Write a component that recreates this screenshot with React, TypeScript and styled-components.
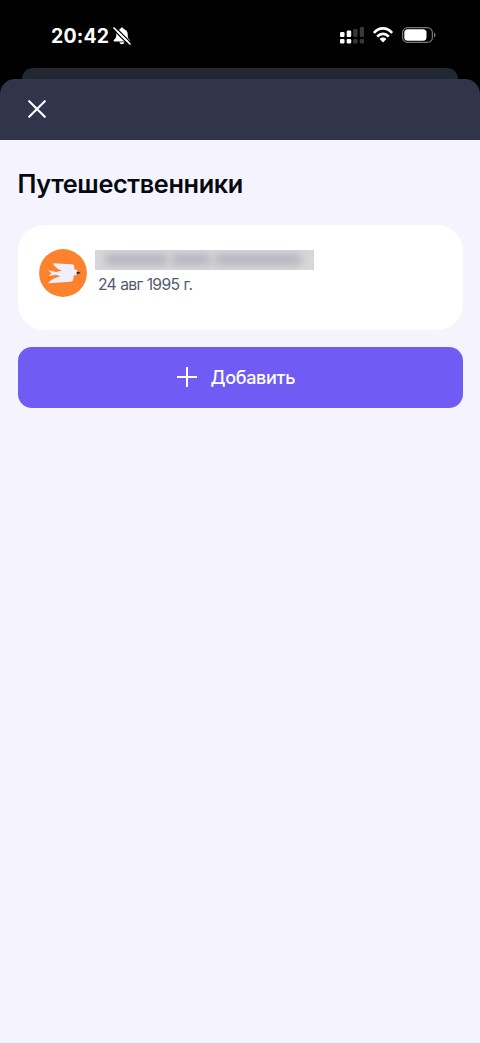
import React from 'react';
import styled, { createGlobalStyle } from 'styled-components';

const GlobalStyle = createGlobalStyle`
  *, *::before, *::after { box-sizing: border-box; }
  body { margin: 0; background: #000; font-family: Inter, "Liberation Sans", sans-serif; }
  button { font: inherit; border: 0; padding: 0; }
`;

const Screen = styled.div`
  display: flex;
  flex-direction: column;
  height: 1043px;
  background: #000;
  overflow: hidden;
`;

const StatusBar = styled.header`
  display: flex;
  align-items: center;
  justify-content: space-between;
  height: 68px;
  flex: none;
  padding: 2px 44px 0 51px;
`;

const Clock = styled.div`
  display: flex;
  align-items: center;
  gap: 4px;
  padding-top: 2px;
  color: #fff;
  font-size: 19.5px;
  line-height: 24px;
  font-weight: 700;
  letter-spacing: 0.15px;
`;

const Indicators = styled.div`
  display: flex;
  align-items: center;
  gap: 9px;
`;

const Glyph = styled.svg`
  display: block;
  flex: none;
`;

const SheetBehind = styled.div`
  height: 11px;
  flex: none;
  margin: 0 22px;
  border-radius: 11px 11px 0 0;
  background: #232731;
`;

const Sheet = styled.main`
  display: flex;
  flex-direction: column;
  flex: 1;
`;

const SheetHeader = styled.div`
  display: flex;
  align-items: center;
  height: 60.5px;
  flex: none;
  padding-left: 28px;
  border-radius: 15px 15px 0 0;
  background: #30354b;
`;

const CloseButton = styled.button`
  background: none;
  display: block;
`;

const Content = styled.div`
  display: flex;
  flex-direction: column;
  flex: 1;
  padding: 28.5px 17.5px 0;
  background: #f5f4fe;
`;

const Title = styled.h1`
  margin: 0;
  color: #06090f;
  font-size: 25.3px;
  line-height: 32px;
  font-weight: 600;
  letter-spacing: -0.37px;
  white-space: nowrap;
`;

const TravellerCard = styled.section`
  display: flex;
  align-items: flex-start;
  gap: 8px;
  height: 105px;
  margin-top: 24.6px;
  padding: 24px 21.5px;
  border-radius: 26px;
  background: #fff;
`;

const TravellerInfo = styled.div`
  display: flex;
  flex-direction: column;
  gap: 5px;
  padding-top: 1.2px;
`;

const HiddenName = styled.div`
  width: 219px;
  height: 20px;
  background: #d8d8db;
  overflow: hidden;
  display: flex;
  align-items: center;
  gap: 5px;
  padding-left: 10px;
`;

const NameWord = styled.span<{ $width: number }>`
  width: ${({ $width }) => $width}px;
  height: 11px;
  background: #b3b4bb;
  filter: blur(4.5px);
`;

const BirthDate = styled.div`
  padding-left: 3px;
  color: #555970;
  font-size: 15.7px;
  line-height: 20px;
  letter-spacing: -0.7px;
  word-spacing: 0.4px;
  white-space: nowrap;
`;

const AddButton = styled.button`
  display: flex;
  align-items: center;
  justify-content: center;
  gap: 13.5px;
  height: 61px;
  margin-top: 17.2px;
  padding-right: 8px;
  border-radius: 14px;
  background: #715bf5;
  color: #fff;
`;

const AddLabel = styled.span`
  font-size: 18px;
  line-height: 24px;
  font-weight: 500;
  letter-spacing: -0.3px;
  padding-top: 1px;
`;

const MutedBell = () => (
  <Glyph width="18" height="18" viewBox="0 0 18 18">
    <path d="M9 .5c-.9 0-1.500.6-1.600 1.400C5 2.500 3.300 4.500 3.300 7c0 3.500-.7 4.500-2.200 5.800-.9.800-.5 1.700.5 1.700h14.400c1 0 1.400-.9.500-1.700C15 11.500 14.700 10.500 14.700 7c0-2.500-1.700-4.500-4.100-5.100C10.500 1.100 9.900.5 9 .5zM6.500 15.300h5c-.2 1.200-1.300 2-2.500 2s-2.300-.8-2.500-2z" fill="#fff" />
    <path d="M0 2.200L16 18.200M2.200 0L18 15.800" stroke="#000" strokeWidth="1.300" />
    <path d="M1 1L17 17" stroke="#fff" strokeWidth="1.700" strokeLinecap="round" />
  </Glyph>
);

const Signal = () => (
  <Glyph width="24" height="18" viewBox="0 0 24 18">
    <g fill="#fff">
      <rect x="0" y="6" width="4.500" height="5" rx="1.200" />
      <rect x="6.700" y="4.500" width="4.500" height="6.500" rx="1.200" />
      <rect x="0" y="13" width="4.500" height="4.500" rx="1.200" />
      <rect x="6.700" y="13" width="4.500" height="4.500" rx="1.200" />
    </g>
    <g fill="#383838">
      <rect x="13.300" y="3" width="4.200" height="8" rx="1.200" />
      <rect x="19.800" y="1" width="4.200" height="10" rx="1.200" />
      <rect x="13.300" y="13" width="4.200" height="4.500" rx="1.200" />
      <rect x="19.800" y="13" width="4.200" height="4.500" rx="1.200" />
    </g>
  </Glyph>
);

const Wifi = () => (
  <Glyph width="20" height="16" viewBox="0 0 20 16">
    <g fill="none" stroke="#fff" strokeWidth="2.700">
      <path d="M.9 6C6-.2 14-.2 19.100 6" />
      <path d="M4.200 9.700c3.500-3.800 8.100-3.800 11.600 0" />
    </g>
    <path d="M6.600 12c2-1.900 4.800-1.900 6.800 0L10 15.500z" fill="#fff" />
  </Glyph>
);

const Battery = () => (
  <Glyph width="34" height="16" viewBox="0 0 34 16">
    <rect x=".6" y=".6" width="29.800" height="14.800" rx="5" fill="none" stroke="#777" strokeWidth="1.200" />
    <rect x="2.300" y="2.300" width="22.200" height="11.400" rx="3.500" fill="#fff" />
    <path d="M32 5.500c2 .8 2 4.200 0 5z" fill="#777" />
  </Glyph>
);

const BirdAvatar = () => (
  <Glyph width="48" height="48" viewBox="0 0 48 48">
    <circle cx="24" cy="24" r="23.900" fill="#fc822e" />
    <path d="M13.700 14.200L33 15.200Q35 15.400 35.200 17.200L35.500 20.500Q39 20.800 39.200 23.500Q38.500 26 34.700 26.600L34.300 30.300Q34 32.500 31.700 32.700L9 34.300Q13 29.300 21.500 27.300L17 25.800L9.700 27L12.500 24.200L9 21.300L17 22.900L23.300 21.600Q16.500 19.500 13.700 14.200Z" fill="#f0effd" />
    <path d="M38 22.500Q40.500 22.700 41.500 24L38.300 25.200Q36.700 24 38 22.500Z" fill="#252837" />
  </Glyph>
);

export default function App() {
  return (
    <>
      <GlobalStyle />
      <Screen>
        <StatusBar>
          <Clock>20:42<MutedBell /></Clock>
          <Indicators><Signal /><Wifi /><Battery /></Indicators>
        </StatusBar>
        <SheetBehind />
        <Sheet>
          <SheetHeader>
            <CloseButton aria-label="Закрыть">
              <Glyph width="18" height="18" viewBox="0 0 18 18">
                <path d="M1.200 1.200L16.800 16.800M16.800 1.200L1.200 16.800" stroke="#fff" strokeWidth="2.100" strokeLinecap="round" />
              </Glyph>
            </CloseButton>
          </SheetHeader>
          <Content>
            <Title>Путешественники</Title>
            <TravellerCard>
              <BirdAvatar />
              <TravellerInfo>
                <HiddenName>
                  <NameWord $width={62} />
                  <NameWord $width={38} />
                  <NameWord $width={86} />
                </HiddenName>
                <BirthDate>24 авг 1995 г.</BirthDate>
              </TravellerInfo>
            </TravellerCard>
            <AddButton>
              <Glyph width="20" height="20" viewBox="0 0 20 20">
                <path d="M10 .5V19.500M.5 10H19.500" stroke="#fff" strokeWidth="2" strokeLinecap="round" />
              </Glyph>
              <AddLabel>Добавить</AddLabel>
            </AddButton>
          </Content>
        </Sheet>
      </Screen>
    </>
  );
}
